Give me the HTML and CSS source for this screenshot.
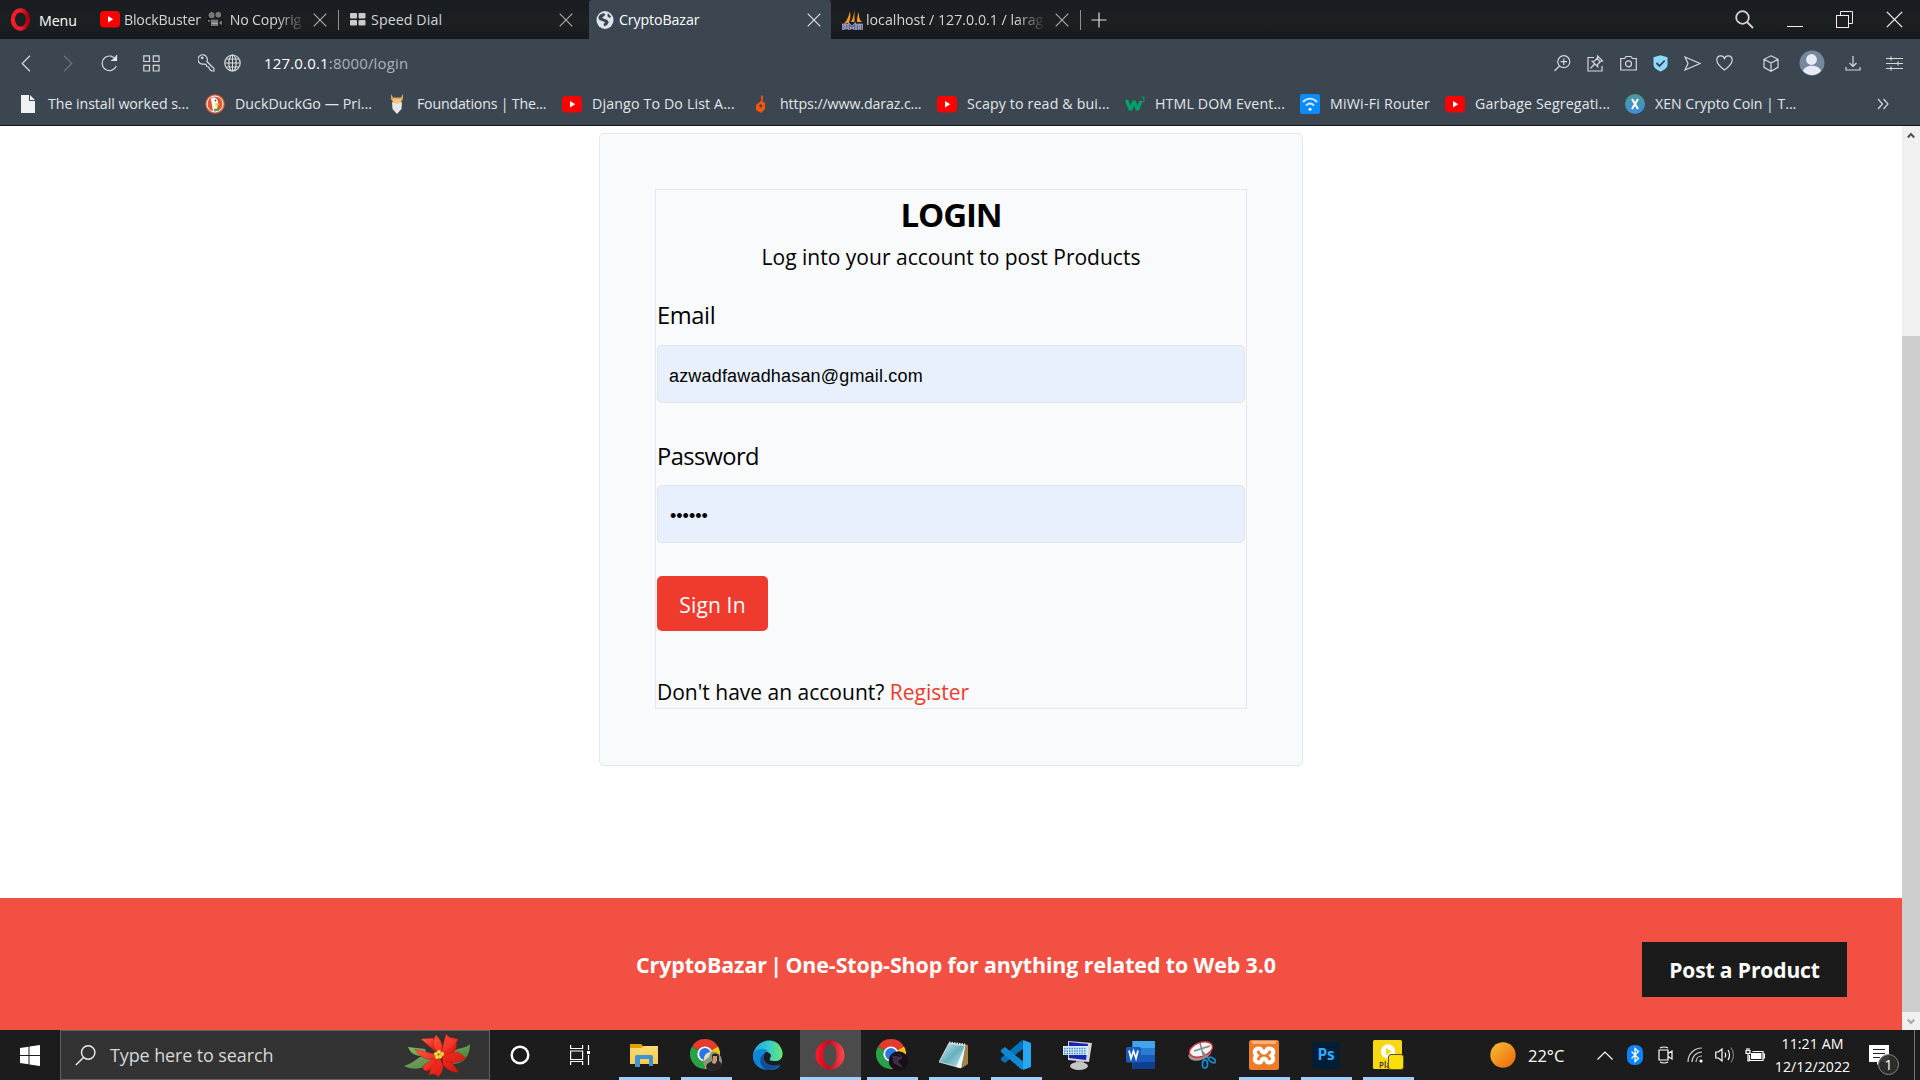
FILE: index.html
```html
<!DOCTYPE html>
<html lang="en">
<head>
<meta charset="utf-8">
<title>CryptoBazar</title>
<link rel="stylesheet" href="styles.css">
</head>
<body>
<svg class="defs" width="0" height="0">
  <defs>
    <linearGradient id="opera" x1="0" x2="1"><stop offset="0" stop-color="#ff1b2d"/><stop offset=".55" stop-color="#f01a2b"/><stop offset="1" stop-color="#a7000f"/></linearGradient>
    <linearGradient id="operaBig" x1="0" x2="1"><stop offset="0" stop-color="#ff1b2d"/><stop offset=".45" stop-color="#c40a1c"/><stop offset="1" stop-color="#ff4a50"/></linearGradient>
    <linearGradient id="edgeTop" x1="0" x2="1"><stop offset="0" stop-color="#1fa7e0"/><stop offset=".5" stop-color="#35c6d0"/><stop offset="1" stop-color="#66eb6e"/></linearGradient>
    <linearGradient id="folder" x1="0" y1="0" x2="0" y2="1"><stop offset="0" stop-color="#ffdc74"/><stop offset="1" stop-color="#fcc84a"/></linearGradient>
    <linearGradient id="sun" x1="0" y1="0" x2="1" y2="1"><stop offset="0" stop-color="#f6c137"/><stop offset="1" stop-color="#f06408"/></linearGradient>
    <linearGradient id="note" x1="0" y1="0" x2="1" y2="1"><stop offset="0" stop-color="#d4eef2"/><stop offset=".5" stop-color="#68b0be"/><stop offset="1" stop-color="#c5e8ee"/></linearGradient>
    <linearGradient id="xen" x1="0" y1="0" x2="0" y2="1"><stop offset="0" stop-color="#4a9c9a"/><stop offset="1" stop-color="#3d8fdc"/></linearGradient>
    <linearGradient id="petal" x1="0" y1="0" x2="1" y2="1"><stop offset="0" stop-color="#ff6a50"/><stop offset=".55" stop-color="#f22a20"/><stop offset="1" stop-color="#b80f0c"/></linearGradient>
    <linearGradient id="leaf" x1="0" y1="0" x2="1" y2="1"><stop offset="0" stop-color="#8dc06a"/><stop offset="1" stop-color="#3d7434"/></linearGradient>
    <symbol id="yt" viewBox="0 0 20 17"><rect width="20" height="16.5" rx="4" fill="#f00"/><path d="M8 5l5.200 3.200L8 11.400z" fill="#fff"/></symbol>
    <symbol id="x" viewBox="0 0 14 14"><path d="M.7.7l12.600 12.600M13.300.7L.7 13.300" fill="none" stroke="currentColor" stroke-width="1.100"/></symbol>
    <symbol id="chrome" viewBox="0 0 30 30">
      <path d="M15 15L2 7.500A15 15 0 0 1 28 7.500z" fill="#e33b2e"/>
      <path d="M15 15L28 7.500A15 15 0 0 1 15 30z" fill="#fbc116"/>
      <path d="M15 15l0 15A15 15 0 0 1 2 7.500z" fill="#28a148"/>
      <circle cx="15" cy="15" r="7.600" fill="#fff"/><circle cx="15" cy="15" r="5.900" fill="#2a74e8"/>
    </symbol>
  </defs>
</svg>

<header class="browser">
  <div class="tabs">
    <div class="menu">
      <svg width="21" height="23" viewBox="0 0 21 23"><ellipse cx="10.500" cy="11.500" rx="7.600" ry="9.200" fill="none" stroke="url(#opera)" stroke-width="4.200"/></svg>
      <span class="menu-label">Menu</span>
    </div>
    <div class="tab tab-video">
      <svg width="20" height="17"><use href="#yt"/></svg>
      <div class="tab-title fade video-title"><span>BlockBuster</span>
        <svg width="17" height="19" viewBox="0 0 18 19"><g fill="#777" stroke="#101010"><circle cx="5" cy="5" r="4"/><circle cx="12" cy="4.500" r="3.700"/><rect x="3.500" y="9" width="9" height="8"/><path d="M12.500 12l4-2.500v7l-4-2.500zM3.500 10l-3-1v4l3-1"/></g><path d="M4.500 13.500h7" stroke="#bbb"/></svg>
        <span>No Copyrig</span></div>
      <svg class="tab-close" width="14" height="14"><use href="#x"/></svg>
    </div>
    <div class="tab tab-dial">
      <svg width="16" height="13" viewBox="0 0 16 13" fill="#c8cacc"><rect width="7" height="5.500" rx="1"/><rect x="8.500" width="7" height="5.500" rx="1"/><rect y="7" width="7" height="5.500" rx="1"/><rect x="8.500" y="7" width="7" height="5.500" rx="1"/></svg>
      <span class="tab-title dial-title">Speed Dial</span>
      <svg class="tab-close" width="14" height="14"><use href="#x"/></svg>
    </div>
    <div class="tab tab-active">
      <svg width="18" height="20" viewBox="0 0 19 20"><ellipse cx="9.500" cy="10" rx="9" ry="9.500" fill="#dfe4ea"/><path d="M2.500 7c1-2.500 3.500-4 6-4l1.500 1.500-3.500 3 1.500 1 4 1.500 1.500 2.500-2 3-3 1-.5-2 1.500-2-3-1.500-3-1zM12.500 2.500l3.500 4-1.500 1.500-2.500-2z" fill="#3b4651"/></svg>
      <span class="tab-title active-title">CryptoBazar</span>
      <svg class="tab-close" width="14" height="14"><use href="#x"/></svg>
    </div>
    <div class="tab tab-pma">
      <svg width="21" height="22" viewBox="0 0 21 22"><path d="M8 2c1 5 0 9-1 11.500L2 15c3-4 5-8 6-13zM17 3c0 5 0 7 3 10h-5c0-3 0-6 2-10zM12.500 0v13H9c2-4 3-7 3.500-13z" fill="#f8981d"/><path d="M1 21v-5h3.500v3H1M7.500 21v-5l2.500 2.500 2.500-2.500v5M15.500 21v-5h4v5M15.500 19h4" stroke="#c9cae8" stroke-width="2.400" fill="none"/><path d="M1 21v-5h3.500v3H1M7.500 21v-5l2.500 2.500 2.500-2.500v5M15.500 21v-5h4v5M15.500 19h4" stroke="#5c5f96" stroke-width="1.200" fill="none"/></svg>
      <span class="tab-title fade pma-title">localhost / 127.0.0.1 / larag</span>
      <svg class="tab-close" width="14" height="14"><use href="#x"/></svg>
    </div>
    <svg class="new-tab" width="16" height="16" viewBox="0 0 16 16"><path d="M8 .5v15M.5 8h15" stroke="#ddd" stroke-width="1.200"/></svg>
    <div class="window-controls">
      <svg width="19" height="19" viewBox="0 0 19 19" fill="none" stroke="#d4d4d4" stroke-width="1.800"><circle cx="7.500" cy="7.500" r="6.300"/><path d="M12 12l6 6"/></svg>
      <svg width="16" height="17" viewBox="0 0 16 17"><path d="M0 15.500h16" stroke="#eee" stroke-width="1"/></svg>
      <svg width="17" height="17" viewBox="0 0 17 17" fill="none" stroke="#eee" stroke-width="1"><rect x=".5" y="4.500" width="12" height="12"/><path d="M4.500 4.500v-4h12v12h-4"/></svg>
      <svg class="win-close" width="17" height="17"><use href="#x"/></svg>
    </div>
  </div>

  <div class="toolbar">
    <div class="nav">
      <svg width="10" height="17" viewBox="0 0 10 17"><path d="M9 .8L1.200 8.500 9 16.200"/></svg>
      <svg class="dim" width="10" height="17" viewBox="0 0 10 17"><path d="M1 .8l7.800 7.700L1 16.200"/></svg>
      <svg width="17" height="18" viewBox="0 0 17 18"><path d="M15 6A7.300 7.300 0 1 0 15.300 12M15.500 1v5.500H10"/><path d="M16 1v6h-6z" fill="#e3e6e9" stroke="none"/></svg>
      <svg width="17" height="17" viewBox="0 0 17 17"><path d="M.8.8h5.700v5.700H.8zM10.300.8H16v5.700h-5.700zM.8 10.300h5.700V16H.8zM10.300 10.300H16V16h-5.700z"/></svg>
    </div>
    <div class="address">
      <svg width="17" height="18" viewBox="0 0 17 18"><path d="M8.900 7.500a4.700 4.700 0 1 0-3 2.500l2 .3 1 2.200 2 .5.500 2 2 2h2.600v-2.500z"/><circle cx="4.200" cy="3.800" r=".8"/></svg>
      <svg width="17" height="18" viewBox="0 0 17 18"><ellipse cx="8.500" cy="9" rx="7.700" ry="8"/><ellipse cx="8.500" cy="9" rx="3.700" ry="8"/><path d="M8.500 1v16M1 9h15M2 5h13M2 13h13" stroke-width="1"/></svg>
      <span class="url"><b>127.0.0.1</b>:8000/login</span>
    </div>
    <div class="tools">
      <svg width="17" height="17" viewBox="0 0 17 17"><circle cx="9.800" cy="6.700" r="6"/><path d="M5.500 11L.5 16M9.800 3.500v6.400M6.600 6.700H13"/></svg>
      <svg width="17" height="17" viewBox="0 0 17 17"><path d="M7 2.500H1V16h14v-5M9.500 3l4 4M10.500 1l5 5-2 .5-3 3 .2 2.200-5.600-5.500L7.500 6l3-3zM7.500 9l-4 4.500"/></svg>
      <svg width="17" height="17" viewBox="0 0 17 17"><path d="M.7 3.500h4L6 1.500h5l1.300 2h4V15H.7z"/><circle cx="8.500" cy="8.800" r="3"/></svg>
      <svg width="15" height="17" viewBox="0 0 15 17"><path d="M7.500.3l7 2v7.500c0 3-3.500 5.500-7 6.700-3.500-1.200-7-3.700-7-6.700V2.300z" fill="#8fd8ff" stroke="none"/><path d="M3.500 8l3 3 5.200-5.500" stroke="#33404c" stroke-width="1.800"/></svg>
      <svg width="17" height="15" viewBox="0 0 17 15"><path d="M1 1l15 6.500L1 14l3-6.500z"/></svg>
      <svg class="heart" width="17" height="16" viewBox="0 0 17 16"><path d="M8.500 3.500C7-.5.800 0 .8 5.200.8 9 4.500 12 8.500 15c4-3 7.700-6 7.700-9.800C16.200 0 10-.5 8.500 3.500z"/></svg>
      <svg class="cube" width="16" height="17" viewBox="0 0 16 17"><path d="M8 .8l7 3.500v8L8 16.200l-7-3.900v-8zM1 4.300L8 8l7-3.700M8 8v8"/></svg>
      <svg class="avatar" width="26" height="26" viewBox="0 0 26 26"><circle cx="13" cy="13" r="12.500" fill="#75889c" stroke="none"/><circle cx="12.500" cy="9.500" r="5.400" fill="#e6ebf5" stroke="none"/><path d="M4 21c2-7 16-7 18 0-4 5.500-14 5.500-18 0z" fill="#e6ebf5" stroke="none"/></svg>
      <svg class="download" width="16" height="16" viewBox="0 0 16 16"><path d="M8 1v10M4.500 8L8 11.500 11.500 8M1 12v3h14v-3"/></svg>
      <svg class="sliders" width="17" height="15" viewBox="0 0 17 15"><path d="M0 2.500h17M0 7.500h17M0 12.500h17M5 .5v4M12 5.500v4M5 10.500v4"/></svg>
    </div>
  </div>

  <nav class="bookmarks">
    <a><svg width="20" height="20" viewBox="0 0 20 20"><path d="M3 1h8v6h6v12H3zM12 1l5 5h-5z" fill="#eef0f2"/></svg><span class="bm-a">The install worked s...</span></a>
    <a><svg width="20" height="20" viewBox="0 0 20 20"><circle cx="10" cy="10" r="9.800" fill="#de5833"/><circle cx="10" cy="10" r="8" fill="none" stroke="#fff"/><path d="M6 5c2-3 7-1 7 3l-1 9H8z" fill="#fff"/><path d="M10 9l5 1-4 2z" fill="#fdd20a"/><path d="M9 15l5-1v3H9z" fill="#5b9e4d"/><circle cx="10.500" cy="6.500" r=".9" fill="#2d4f8e"/></svg><span class="bm-b">DuckDuckGo — Pri...</span></a>
    <a><svg width="20" height="20" viewBox="0 0 20 20"><path d="M4 0l2 3.500h8L16 0v5l-2 3H6L4 5z" fill="#e0a84c"/><path d="M6 5h8l-.5 8h-7z" fill="#f0c58a"/><path d="M5 8l5 2 5-2-.5 7-4.500 5-4.500-5z" fill="#e8e6e6"/></svg><span class="bm-c">Foundations | The...</span></a>
    <a><svg width="20" height="17"><use href="#yt"/></svg><span class="bm-d">Django To Do List A...</span></a>
    <a><svg width="20" height="20" viewBox="0 0 20 20"><path d="M11 1c3 1 2 4 1 6l3 2v6l-4 4-5-3v-5l5-4zM11 10l-2 1.500 2 2.500 1.500-2z" fill="#f85606" fill-rule="evenodd"/></svg><span class="bm-e">https://www.daraz.c...</span></a>
    <a><svg width="20" height="17"><use href="#yt"/></svg><span class="bm-f">Scapy to read &amp; bui...</span></a>
    <a><svg width="20" height="17" viewBox="0 0 20 17"><path d="M1.500 4l4 10L9 5l3.500 9L16 5" fill="none" stroke="#04a06a" stroke-width="3.400" stroke-linejoin="bevel"/><path d="M16.500 1h3l-1.500 2c2 0 2 3-1.500 2.500" fill="none" stroke="#04a06a"/></svg><span class="bm-g">HTML DOM Event...</span></a>
    <a><svg width="20" height="20" viewBox="0 0 20 20"><rect width="20" height="20" rx="2" fill="#0a8cff"/><path d="M3 8c4-4.500 10-4.500 14 0M6 11.500c2.500-2.500 5.500-2.500 8 0" fill="none" stroke="#cfe8ff" stroke-width="1.900"/><circle cx="10" cy="15.300" r="1.500" fill="#fff"/></svg><span class="bm-h">MiWi-Fi Router</span></a>
    <a><svg width="20" height="17"><use href="#yt"/></svg><span class="bm-i">Garbage Segregati...</span></a>
    <a><svg width="20" height="20" viewBox="0 0 20 20"><circle cx="10" cy="10" r="10" fill="url(#xen)"/><path d="M7 5l6 10M13 5L7 15" stroke="#fff" stroke-width="2"/></svg><span class="bm-j">XEN Crypto Coin | T...</span></a>
    <svg class="more" width="12" height="12" viewBox="0 0 12 12"><path d="M1 1l4.500 5L1 11M6.500 1L11 6l-4.500 5" fill="none" stroke="#d5d8db" stroke-width="1.200"/></svg>
  </nav>
</header>

<div class="viewport">
  <main class="page">
    <section class="card">
      <form class="login">
        <h1>LOGIN</h1>
        <p class="intro">Log into your account to post Products</p>
        <label for="email">Email</label>
        <input id="email" type="text" value="azwadfawadhasan@gmail.com">
        <label class="second" for="pass">Password</label>
        <input id="pass" type="password" value="secret">
        <button type="button"><span>Sign In</span></button>
        <p class="register">Don't have an account? <a>Register</a></p>
      </form>
    </section>
    <footer class="site-footer">
      <p>CryptoBazar <span class="bar">|</span> One-Stop-Shop for anything related to Web 3.0</p>
      <a class="post">Post a Product</a>
    </footer>
  </main>
  <aside class="scrollbar">
    <div class="scroll-end"><svg width="8" height="7" viewBox="0 0 8 7"><path d="M.8 5.500L4 2l3.200 3.500" fill="none" stroke="#505050" stroke-width="2"/></svg></div>
    <div class="thumb"></div>
    <div class="scroll-end"><svg width="8" height="7" viewBox="0 0 8 7"><path d="M.8 1.500L4 5l3.200-3.500" fill="none" stroke="#a8a8a8" stroke-width="2"/></svg></div>
  </aside>
</div>

<footer class="taskbar">
  <div class="start"><svg width="20" height="21" viewBox="0 0 20 21" fill="#fff"><path d="M0 3l8.500-1.200V10H0zM9.500 1.600L20 0v10H9.500zM0 11h8.500v8.200L0 18zM9.500 11H20v10L9.500 19.400z"/></svg></div>
  <div class="search">
    <svg width="21" height="21" viewBox="0 0 21 21" fill="none" stroke="#eee" stroke-width="1.400"><circle cx="13.200" cy="7.500" r="6.700"/><path d="M8.500 12.500L.8 20"/></svg>
    <span class="search-text">Type here to search</span>
    <svg class="flower" width="68" height="43" viewBox="0 0 68 43">
      <path d="M28 20C16 20 14 28 1 32c10 5 20 3 29-4zM22 15L5 13c3 8 10 10 20 9zM48 22C50 12 62 16 67 10c0 12-6 20-17 20z" fill="url(#leaf)"/>
      <g fill="url(#petal)" stroke="#b5140f" stroke-width=".4"><path d="M34 19L18 5l12-1 8 10z"/><path d="M38 20L50 3c6 7 4 14-4 20z"/><path d="M36 19C29 14 29 7 33 1c5 5 8 10 5 18zM38 19L43 0c3 4 5 4 12 5-3 8-9 12-17 14zM35 21L12 15c4 6 8 12 22 10zM34 22L20 32c0 4 0 4 4 5 6-3 10-7 11-14zM36 23l-8 10-2 8c4-2 7-1 9 2 6-5 6-12 4-20zM38 22l8 3 10 13c-7 1-16-3-19-14zM40 21l15-3 8 6c-8 6-18 6-24 0z"/></g>
      <g fill="#ffe34d" stroke="#b99114" stroke-width=".5"><circle cx="33" cy="20" r="2"/><circle cx="36" cy="18" r="2"/><circle cx="39" cy="20" r="2"/><circle cx="37" cy="22.500" r="2"/><circle cx="34" cy="23" r="2"/></g>
    </svg>
  </div>
  <div class="shell"><svg width="20" height="20" viewBox="0 0 20 20"><circle cx="10" cy="10" r="8.300" fill="none" stroke="#fff" stroke-width="2.400"/></svg></div>
  <div class="shell"><svg width="20" height="20" viewBox="0 0 20 20" fill="none" stroke="#fff" stroke-width="1.200"><path d="M.6 0v3.500h12V0M.6 20v-3.500h12V20M.6 6h12v8.500H.6zM18.500 0v5M18.500 10v10"/><path d="M17 6h3v3h-3z" fill="#fff" stroke="none"/></svg></div>
  <div class="apps">
    <div class="app open"><svg width="28" height="24" viewBox="0 0 28 24"><path d="M0 1h11l3 3v5H0z" fill="#e0a100"/><path d="M0 5l11 0 3-2h14v18H0z" fill="url(#folder)"/><path d="M5 24V14q0-2 2-2h14q2 0 2 2v9h-4v-7h-9v8z" fill="#3b94d8"/></svg></div>
    <div class="app open"><svg width="33" height="33" viewBox="0 0 33 33"><use href="#chrome" width="30" height="30"/><circle cx="22.500" cy="22" r="9.500" fill="#8b9873"/><path d="M14 18c2-4 4-5 7-5l-2 5-5 4z" fill="#d8dcc8"/><path d="M16 29l1-4 5-3v-6c2-2 6-2 7 1v5c3 2 3 5 0 7-4 4-9 3-13 0z" fill="#252527"/><path d="M23 17h4v5l-2 3-3-1z" fill="#c99676"/></svg></div>
    <div class="app"><svg width="30" height="30" viewBox="0 0 30 30"><path d="M0 16C1 0 22-5 28 8c4 8 0 14-8 13-5 0-3-3-2-5 0-4-8-6-12-4-4 1-6 3-6 4z" fill="url(#edgeTop)"/><path d="M0 15c2-7 12-7 15-4-6 2-6 10-1 14 4 3 9 3 14 0-4 5-10 6-15 5C4 28-1 22 0 15z" fill="#1085d8"/><path d="M12 13c-4 8 4 15 15 11-4 6-11 7-14 6-7-4-8-13-1-17z" fill="#144d96"/></svg></div>
    <div class="app open current"><svg width="30" height="30" viewBox="0 0 30 30"><path fill-rule="evenodd" d="M15 .5a14.500 14.500 0 1 0 0 29 14.500 14.500 0 0 0 0-29zM15 4c4 0 6.500 5 6.500 11S19 26 15 26 8.500 21 8.500 15 11 4 15 4z" fill="url(#operaBig)"/></svg></div>
    <div class="app open"><svg width="33" height="33" viewBox="0 0 33 33"><use href="#chrome" width="30" height="30"/><circle cx="22.500" cy="22" r="9.800" fill="#181018"/><path d="M17 17l9 2-5 3 5 6-8-4zM22 15l4 3" fill="#4b2838" stroke="#33385a"/></svg></div>
    <div class="app open"><svg width="30" height="29" viewBox="0 0 30 29"><path d="M25 3l4 1v19l-6 4z" fill="#a18348"/><path d="M10 2l16 2-4 23L0 21z" fill="url(#note)" stroke="#eff" stroke-width=".7"/><path d="M10 2l16 2" stroke="#ddd" stroke-width="3" stroke-dasharray="1.500 1"/><path d="M26 5l-4 22-5-1z" fill="#eefaff"/></svg></div>
    <div class="app open"><svg width="30" height="30" viewBox="0 0 30 30"><path d="M21 0l2 8L4 23l-4-3v-2L21 0z" fill="#0072b8"/><path d="M4 7L0 10v2l21 18 3-7z" fill="#0f8ad2"/><path d="M22 0l8 3v24l-8 3z" fill="#27a6f2"/></svg></div>
    <div class="app"><svg width="30" height="29" viewBox="0 0 30 29"><path d="M13 19h8v5h-8z" fill="#999"/><ellipse cx="16" cy="25" rx="9" ry="4" fill="#c6c6c6"/><path d="M5 0l24 2-3 19L5 19z" fill="#d6d6d6"/><path d="M6 1l19 2-2 16L6 17z" fill="#1426b8"/><path d="M0 5h25v9H0z" fill="#d9e9f8"/><path d="M1 7.500h22M1 10h22M1 12.500h22" stroke="#3c8cc8" stroke-width="1.400" stroke-dasharray="1.500 1"/></svg></div>
    <div class="app"><svg width="29" height="28" viewBox="0 0 29 28"><rect x="6.500" width="22.500" height="28" fill="#2b7cd3"/><path d="M6.500 0H29v7H6.500z" fill="#41a5ee"/><path d="M6.500 14H29v7H6.500z" fill="#185abd"/><path d="M6.500 21H29v7H6.500z" fill="#103f91"/><rect y="6" width="15" height="15.500" rx="1.500" fill="#185abd"/><path d="M3 9.500l2 8 2.500-7.500 2.500 7.500 2-8" fill="none" stroke="#fff" stroke-width="1.700"/></svg></div>
    <div class="app"><svg width="28" height="28" viewBox="0 0 28 28"><ellipse cx="12" cy="12" rx="12" ry="7" transform="rotate(-20 12 12)" fill="#999"/><ellipse cx="13" cy="8.500" rx="12" ry="7" transform="rotate(-20 13 8.500)" fill="#f5f5f5" stroke="#c9303a" stroke-width="1.400"/><path d="M6 10l16-5M12 2l4 15M15 11l6 7" stroke="#888" stroke-width="1.500"/><g fill="none" stroke="#1688cc" stroke-width="1.800"><ellipse cx="17" cy="23" rx="2.500" ry="4"/><ellipse cx="24" cy="19" rx="4" ry="2" transform="rotate(30 24 19)"/></g></svg></div>
    <div class="app open"><svg width="30" height="30" viewBox="0 0 30 30"><rect width="30" height="30" rx="2.500" fill="#ef7a28"/><path d="M2 1h26l-2 3H4z" fill="#f6b184"/><path d="M10 8.500c-4.500 0-5.500 4-2.500 7-3 3-1.500 7 2.500 7 3.500 0 2-4 5-4s1.500 4 5 4c4 0 5.500-4 2.500-7 3-3 2-7-2.500-7-3.500 0-2 4-5 4s-1.500-4-5-4z" fill="none" stroke="#fff" stroke-width="4.200"/></svg></div>
    <div class="app open"><div class="ps">Ps</div></div>
    <div class="app open"><div class="py"><svg width="30" height="30" viewBox="0 0 30 30"><rect width="29" height="29" rx="1.500" fill="#f8d714"/><circle cx="15" cy="11.500" r="7.200" fill="#fff"/><path d="M13 8l5.500 3.500L13 15z" fill="#f8d714"/></svg><span>Pla</span><i></i></div></div>
  </div>
  <div class="weather"><svg width="26" height="26" viewBox="0 0 26 26"><circle cx="13" cy="13" r="12.700" fill="url(#sun)"/></svg><span>22°C</span></div>
  <div class="tray">
    <svg width="16" height="9" viewBox="0 0 16 9"><path d="M.5 8.500L8 1l7.500 7.500"/></svg>
    <svg width="16" height="20" viewBox="0 0 16 20"><rect width="16" height="20" rx="7" fill="#0a84ff" stroke="none"/><path d="M4.500 6.500l7 7L8 16.500v-13l3.500 3-7 7" stroke-width="1.300"/></svg>
    <svg width="15" height="18" viewBox="0 0 15 18"><path d="M1 4h9v10H1zM10 7.500l4-2.500v8l-4-2.500M2 2q4-2 8 0M2 16q4 2 8 0"/></svg>
    <svg width="16" height="16" viewBox="0 0 16 16"><path d="M1 15C1 7 7 1 15 1M5 15C5 9.500 9.500 5 15 5M9 15c0-3.500 2.500-6 6-6" stroke="#ccc"/><circle cx="14" cy="14" r="1.600" fill="#fff" stroke="none"/></svg>
    <svg width="20" height="18" viewBox="0 0 20 18"><path d="M.8 6h2.700L7 3v12l-3.500-3H.8zM10 6.500q1.500 2.500 0 5M13 4q3 5 0 10"/><path d="M16 1.500q5 7.500 0 15" stroke="#777"/></svg>
    <svg width="20" height="14" viewBox="0 0 20 14"><path d="M4.500 7v5.500H18v-9H7.500M18.500 6h1v4h-1M1 2.500h4v2.800H1zM2 0v2.500M4 0v2.500M3 5.500V13h1.500"/><path d="M6 5h10.500v6H6z" fill="#fff" stroke="none"/></svg>
  </div>
  <div class="clock"><span class="time">11:21 AM</span><span class="date">12/12/2022</span></div>
  <div class="notify">
    <svg width="20" height="20" viewBox="0 0 20 20"><path d="M0 0h20v17H11l-3 3v-3H0z" fill="#fff"/><path d="M4 4.500h12M4 8.500h12M4 12.500h7" stroke="#222" stroke-width="1.200"/></svg>
    <span class="badge">1</span>
  </div>
  <div class="peek"></div>
</footer>
</body>
</html>
```
FILE: styles.css
```css
* { box-sizing: border-box; }
body { margin: 0; width: 1920px; height: 1080px; overflow: hidden; display: flex; flex-direction: column; background: #fff; font-family: "Open Sans", "Noto Sans", sans-serif; color: #000; }
svg { display: block; flex: none; }
.defs { position: absolute; }
span, p, h1, a { white-space: nowrap; }
p, h1 { margin: 0; }

/* browser chrome */
.browser { height: 126px; flex: none; background: #3b4651; border-bottom: 1px solid #14161c; font-size: 14.2px; }
.tabs { height: 39px; display: flex; align-items: center; background: linear-gradient(#191d21, #1c2023 60%, #16191d); color: #d3d4d5; }
.menu { width: 90px; padding-left: 10px; display: flex; align-items: center; gap: 8px; color: #fff; }
.menu-label { padding-top: 2px; letter-spacing: -.1px; }
.tab { height: 39px; display: flex; align-items: center; position: relative; }
.tab-close { margin-left: auto; color: #aeb0b2; }
.tab-title { padding-left: 4px; }
.fade { overflow: hidden; -webkit-mask-image: linear-gradient(90deg, #000 84%, transparent); mask-image: linear-gradient(90deg, #000 84%, transparent); }
.tab-video { width: 249px; padding: 0 12px 0 10px; }
.video-title { display: flex; gap: 6px; width: 187px; align-items: center; letter-spacing: -.2px; }
.tab-video::after, .tab-pma::after { content: ""; position: absolute; right: 0; top: 10px; width: 1px; height: 20px; background: #8c9196; }
.tab-dial { width: 250px; padding: 0 16px 0 11px; }
.dial-title { padding-left: 5px; letter-spacing: .1px; }
.tab-active { width: 242px; padding: 0 10px 0 7px; background: #3b4651; color: #fff; border-radius: 3px 3px 0 0; }
.active-title { padding-left: 5px; letter-spacing: -.1px; }
.tab-active .tab-close { color: #e5e7e9; }
.tab-pma { width: 250px; padding: 0 12px 0 11px; }
.pma-title { width: 183px; padding-left: 3px; }
.new-tab { margin-left: 10px; }
.window-controls { margin-left: auto; padding-right: 17px; display: flex; align-items: center; gap: 33px; color: #eee; }

.toolbar { height: 48px; display: flex; align-items: center; padding: 0 17px 0 21px; }
.toolbar svg { fill: none; stroke: #d5d9dc; stroke-width: 1.2; }
.nav { display: flex; align-items: center; width: 177px; }
.nav svg:nth-child(2) { margin-left: 32px; }
.nav svg:nth-child(3) { margin-left: 28px; }
.nav svg:nth-child(4) { margin-left: 25px; }
.nav .dim { stroke: #69747e; }
.address { display: flex; align-items: center; gap: 9px; font-size: 15px; color: #a9b3bc; }
.url { padding-left: 14px; letter-spacing: .17px; }
.url b { font-weight: 400; color: #fff; }
.tools { margin-left: auto; display: flex; align-items: center; gap: 16px; }
.heart { margin-left: -1px; }
.cube { margin-left: 14px; }
.avatar { margin-left: 4px; }
.download { margin-left: 4px; }
.sliders { margin-left: 9px; }

.bookmarks { height: 34px; display: grid; align-items: center; color: #e3e6e8; padding-left: 18px; grid-template-columns: 187px 182px 175px 188px 187px 188px 175px 145px 180px 252px 12px; }
.bookmarks a { display: flex; align-items: center; gap: 10px; }
.bookmarks span { margin-top: -2px; }
.bm-a { letter-spacing: -.05px; }
.bm-b { letter-spacing: .06px; }
.bm-c { letter-spacing: -.2px; }
.bm-d { letter-spacing: .15px; }
.bm-e { letter-spacing: -.1px; }
.bm-f { letter-spacing: .15px; }
.bm-g { letter-spacing: .13px; }
.bm-h { letter-spacing: .22px; }
.bm-i { letter-spacing: .13px; }
.bm-j { letter-spacing: -.04px; }

/* page */
.viewport { height: 904px; display: flex; }
.page { width: 1902px; display: flex; flex-direction: column; align-items: center; }
.card { margin-top: 7px; width: 704px; height: 633px; padding: 55px; border: 1px solid #e5e7eb; border-radius: 5px; background: #f9fafc; }
.login { height: 520px; border: 1px solid #e5e7eb; padding: 0 1px; display: flex; flex-direction: column; }
.login > * { flex-shrink: 0; }
h1 { font-size: 33px; line-height: 40px; font-weight: 700; text-align: center; margin-top: 5px; letter-spacing: -1.1px; }
.intro { font-size: 21px; line-height: 34px; text-align: center; margin-top: 5px; letter-spacing: .01px; }
label { font-size: 23.7px; line-height: 36px; margin-top: 23px; letter-spacing: -.4px; }
label.second { margin-top: 35px; letter-spacing: -.6px; }
input { height: 58px; margin-top: 12px; padding: 4px 12px 0 11px; border: 1px solid #e1e4ea; border-radius: 5px; background: #e8f0fe; font: 18px "Liberation Sans", sans-serif; color: #000; }
#email { letter-spacing: .18px; }
label.second + input { margin-top: 11px; padding-left: 12px; }
button { align-self: flex-start; margin-top: 33px; width: 111px; height: 55px; padding: 2px 0 0; border: 0; border-radius: 5px; background: #ef3b2d; color: #fff; font: 21px "Open Sans", sans-serif; letter-spacing: .15px; }
.register { font-size: 21px; line-height: 32px; margin-top: 45px; }
.register a { color: #ef3b2d; }
.site-footer { align-self: stretch; margin-top: auto; height: 132px; background: #f25042; color: #fff; display: flex; padding-left: 636px; font-weight: 700; }
.site-footer p { font-size: 21.4px; line-height: 34px; margin-top: 50px; letter-spacing: -.1px; }
.bar { margin: 0 -2px; }
.post { margin: 44px 55px 0 auto; width: 205px; height: 55px; padding-top: 1px; background: #1b1b1b; font-size: 21px; line-height: 55px; text-align: center; letter-spacing: -.1px; }
.scrollbar { width: 18px; background: #f0f0f0; display: flex; flex-direction: column; }
.scroll-end { height: 18px; display: flex; align-items: center; justify-content: center; }
.thumb { margin-top: auto; height: 676px; background: #cdcdcd; }

/* taskbar */
.taskbar { height: 50px; background: #1c1c1c; display: flex; color: #fff; }
.start { width: 60px; display: flex; align-items: center; justify-content: center; }
.search { width: 430px; border: 1px solid #606060; background: #333; display: flex; align-items: center; padding: 0 18px 0 14px; }
.search-text { margin-left: 14px; font-size: 18px; color: #d5d8dc; letter-spacing: -.12px; }
.flower { margin-left: auto; }
.shell { width: 60px; display: flex; align-items: center; justify-content: center; }
.apps { display: flex; margin-left: 4px; }
.app { width: 62px; height: 50px; display: flex; align-items: center; justify-content: center; border: solid transparent; border-width: 0 6px 0 5px; }
.app > * { margin-right: 1px; }
.open { background: linear-gradient(#a3cfff, #a3cfff) bottom / 100% 3px no-repeat padding-box; }
.current { border-width: 0 1px 0 0; background-color: #4b4b4b; background-clip: padding-box; }
.ps { width: 28px; height: 27px; border-radius: 4px; background: #001e36; color: #31a8ff; font-size: 15.5px; font-weight: 700; line-height: 25px; text-align: center; letter-spacing: -.3px; }
.py { position: relative; width: 30px; height: 30px; }
.py span { position: absolute; left: 6px; bottom: 0; font-size: 8px; font-weight: 600; color: #3a3520; }
.py i { position: absolute; right: -1px; bottom: 0; width: 16px; height: 16px; border: 1.5px solid #5a5120; border-radius: 3px; background: #fbdf0a; }
.weather { margin-left: 70px; display: flex; align-items: center; gap: 12px; width: 107px; font-size: 16.5px; }
.tray { display: flex; align-items: center; width: 178px; gap: 14px; }
.tray svg { fill: none; stroke: #fff; stroke-width: 1.2; }
.tray svg:nth-child(3) { margin-left: 1px; }
.tray svg:nth-child(5) { margin-left: -2px; }
.tray svg:nth-child(6) { margin-left: -4px; }
.clock { width: 75px; display: flex; flex-direction: column; align-items: center; font-size: 14.2px; line-height: 23px; padding-top: 2px; }
.time { letter-spacing: .05px; }
.notify { position: relative; margin-left: 19px; width: 30px; padding-top: 15px; }
.badge { position: absolute; left: 9px; top: 24px; width: 21px; height: 21px; border: 1px solid #888; border-radius: 50%; background: #2e2e2eee; font-size: 14px; line-height: 19px; text-align: center; }
.peek { margin-left: auto; margin-right: 5px; width: 1px; background: #777; }
```
